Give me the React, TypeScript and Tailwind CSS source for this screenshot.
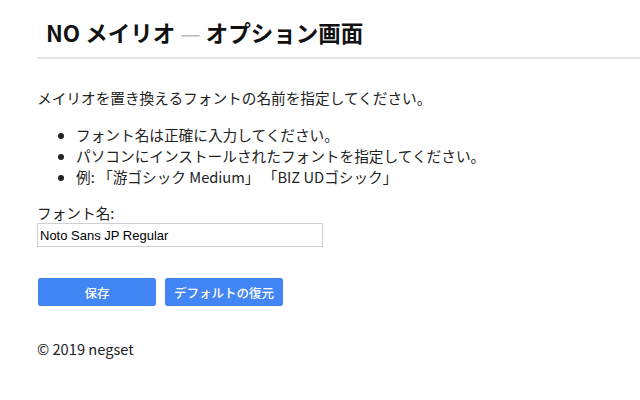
export default function App() {
  const font = { fontFamily: '"Noto Sans CJK JP", "Noto Sans", sans-serif' };
  return (
    <div className="w-[640px] h-[400px] bg-white text-[#222]" style={font}>
      {/* Header */}
      <div className="ml-[37px] pt-[18px] pb-[11px] border-b-2 border-[#e2e2e2]">
        <h1 className="pl-[9px] text-[22.5px] leading-[28px] font-bold text-[#111]">
          NO メイリオ <span className="text-[#bbb] font-normal">—</span> オプション画面
        </h1>
      </div>

      <div className="px-[37px] text-[14.67px] leading-[21px]">
        <p className="mt-[28px]">メイリオを置き換えるフォントの名前を指定してください。</p>

        <ul className="mt-[16px] list-disc pl-[39px]">
          <li>フォント名は正確に入力してください。</li>
          <li>パソコンにインストールされたフォントを指定してください。</li>
          <li>例: 「游ゴシック Medium」 「BIZ UDゴシック」</li>
        </ul>

        <label className="block mt-[15px]">フォント名:</label>
        <input
          type="text"
          defaultValue="Noto Sans JP Regular"
          className="block w-[286px] h-[24px] px-[2px] border border-[#d0d0d0] text-[13px] text-black outline-none"
          style={{ fontFamily: '"Liberation Sans", Arial, sans-serif' }}
        />

        <div className="mt-[31px] ml-[1px] flex gap-[9px]">
          <button className="w-[118px] h-[28px] rounded-[3px] bg-[#4285f4] text-white text-[12.5px] font-medium shadow-[0_0_1px_rgba(0,0,0,0.3)]">
            保存
          </button>
          <button className="w-[118px] h-[28px] rounded-[3px] bg-[#4285f4] text-white text-[12.5px] font-medium shadow-[0_0_1px_rgba(0,0,0,0.3)]">
            デフォルトの復元
          </button>
        </div>

        <p className="mt-[32px]">© 2019 negset</p>
      </div>
    </div>
  );
}
